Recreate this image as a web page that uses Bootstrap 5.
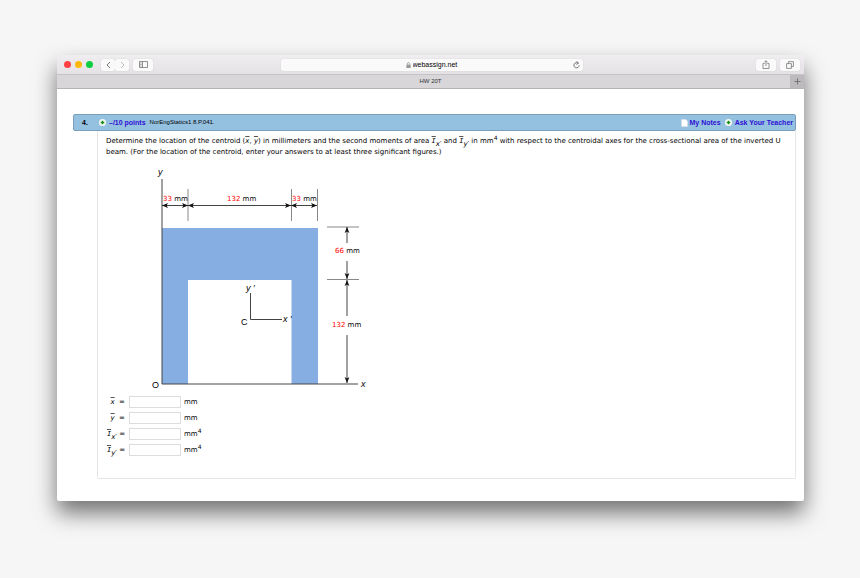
<!DOCTYPE html>
<html lang="en">
<head>
<meta charset="utf-8">
<meta name="viewport" content="width=device-width, initial-scale=1">
<title>HW 20T</title>
<link href="https://cdn.jsdelivr.net/npm/bootstrap@5.3.0/dist/css/bootstrap.min.css" rel="stylesheet">
<style>
  body { background: #f6f6f6; color: #000; font-family: "DejaVu Sans", sans-serif; font-size: 7px; line-height: 11px; padding: 55px 56px 60px 57px; }
  .ui-font { font-family: "Liberation Sans", sans-serif; }
  .browser { border-radius: 4px 4px 2px 2px; box-shadow: 0 12px 22px rgba(0,0,0,.54); }
  .toolbar { height: 20px; padding: 0 4px 0 7px; background: linear-gradient(#efedef, #e4e2e4); border-bottom: 1px solid #c5c3c5; border-radius: 4px 4px 0 0; }
  .dot { width: 7px; height: 7px; border-radius: 50%; }
  .dot-red { background: #fc4044; } .dot-amber { background: #fdb90b; } .dot-green { background: #0bcf40; }
  .tool { display: flex; align-items: center; justify-content: center; width: 20px; height: 12px; padding: 0; border: 0; border-radius: 2px; background: #fbfafb; color: #777; box-shadow: 0 0 1px rgba(0,0,0,.2); }
  .tool-nav { width: 14px; }
  .tool svg, .address svg { display: block; fill: none; stroke: currentColor; }
  .address { width: 41%; height: 12px; background: #fbfafb; border-radius: 2px; box-shadow: 0 0 1px rgba(0,0,0,.2); }
  .address input { width: 46px; height: 10px; padding: 0; border: 0; background: transparent; font-size: 7px; line-height: 10px; color: #000; }
  .address .lock { margin-right: 2px; }
  .reload { padding: 0; border: 0; background: transparent; color: #555; width: 10px; }
  .tabs { height: 14px; padding-left: 14px; background: #d8d6d8; border-bottom: 1px solid #b5b3b5; font-size: 6px; color: #333; }
  .tab-new { width: 14px; border: 0; padding: 0; background: #bcbabc; color: #666; display: flex; align-items: center; justify-content: center; }
  .sheet { padding: 25px 8px 22px 16px; }
  .question-head { height: 17px; padding: 0 2px 0 8px; background: #95c1e1; border: 1px solid #7a9fbc; border-radius: 2px; font-size: 7px; }
  .question-head a { color: #2e10d4; font-weight: 700; text-decoration: none; }
  .source { font-size: 6px; }
  .number { width: 17px; }
  .plus { width: 7px; height: 7px; display: block; margin-right: 3px; }
  .note-icon { margin-right: 2px; }
  .question-body { margin-left: 24px; padding: 5px 6px 20px 8px; border: 1px solid #e6e6e6; border-top: 0; border-radius: 0 0 2px 2px; }
  .bar { text-decoration: overline #555; }
  .cap { font-family: "DejaVu Sans Mono", monospace; font-style: italic; }
  sub, sup { font-size: 6px; line-height: 0; }
  sub { font-size: 7px; bottom: -3px; }
  .figure-svg { display: block; width: 240px; margin: 5px 0 1px 39px; }
  .answer { height: 16px; }
  .answer label { width: 19px; text-align: right; white-space: nowrap; }
  .answer input { width: 52px; height: 12px; margin: 0 3px 0 4px; padding: 0 2px; border: 1px solid #ddd; background: #fff; font-size: 7px; }
</style>
</head>
<body>
<main class="browser bg-white">
  <header class="toolbar d-flex align-items-center ui-font">
    <div class="d-flex align-items-center flex-fill w-25">
      <div class="d-flex gap-1 me-2"><span class="dot dot-red"></span><span class="dot dot-amber"></span><span class="dot dot-green"></span></div>
      <button class="tool tool-nav" aria-label="Back"><svg width="5" height="8" viewBox="0 0 5 8"><path d="M4 1 1 4l3 3"/></svg></button>
      <button class="tool tool-nav" aria-label="Forward"><svg width="5" height="8" viewBox="0 0 5 8"><path stroke="#bbb" d="m1 1 3 3-3 3"/></svg></button>
      <button class="tool ms-1" aria-label="Sidebar"><svg width="9" height="7" viewBox="0 0 9 7"><path stroke-width=".8" d="M.5.5h8v6h-8zM3.5.5v6M1.3 2h1.2M1.3 3.5h1.2M1.3 5h1.2"/></svg></button>
    </div>
    <div class="address d-flex align-items-center">
      <span class="reload"></span>
      <div class="d-flex align-items-center justify-content-center flex-fill">
        <svg class="lock" width="5" height="6" viewBox="0 0 5 7"><path stroke="#999" d="M1.2 3V2a1.3 1.3 0 0 1 2.6 0v1"/><path fill="#999" stroke="none" d="M0 3h5v4H0z"/></svg>
        <input type="text" value="webassign.net" aria-label="Address">
      </div>
      <button class="reload" aria-label="Reload"><svg width="7" height="8" viewBox="0 0 7 8"><path stroke-width=".8" d="M5.3 2.4A2.6 2.6 0 1 0 6.1 4.4M3.5.3l2 1.7-2 1.5"/></svg></button>
    </div>
    <div class="d-flex justify-content-end gap-1 flex-fill w-25">
      <button class="tool" aria-label="Share"><svg width="8" height="9" viewBox="0 0 8 9"><path stroke-width=".8" d="M2.7 3.5H1v5h6v-5H5.3M4 6V.8M2.4 2.3 4 .7l1.6 1.6"/></svg></button>
      <button class="tool" aria-label="Tabs"><svg width="8" height="8" viewBox="0 0 8 8"><path stroke-width=".8" d="M.6 2.6h4.8v4.8H.6zM2.4 2.6V.6h5v5h-2"/></svg></button>
    </div>
  </header>
  <div class="tabs d-flex ui-font">
    <div class="flex-fill d-flex align-items-center justify-content-center">HW 20T</div>
    <button class="tab-new" aria-label="New tab"><svg width="7" height="7" viewBox="0 0 7 7"><path stroke="currentColor" stroke-width=".8" d="M3.5.5v6M.5 3.5h6"/></svg></button>
  </div>

  <div class="sheet">
    <div class="question-head d-flex align-items-center ui-font">
      <b class="number">4.</b>
      <svg class="plus" viewBox="0 0 7 7"><circle cx="3.5" cy="3.5" r="3.5" fill="#f4f8f2"/><path stroke="#158a15" stroke-width="1.3" d="M3.5 1.7v3.6M1.7 3.5h3.6"/></svg>
      <a href="#" class="me-1">–/10 points</a>
      <span class="source">NorEngStatics1 8.P.041.</span>
      <svg class="note-icon ms-auto" width="7" height="8" viewBox="0 0 7 8"><path fill="#fff" stroke="#bccbd6" stroke-width=".5" d="M.3.3h4.5l1.9 1.9v5.5H.3z"/></svg>
      <a href="#">My Notes</a>
      <svg class="plus ms-1" viewBox="0 0 7 7"><circle cx="3.5" cy="3.5" r="3.5" fill="#f4f8f2"/><path stroke="#158a15" stroke-width="1.3" d="M3.5 1.7v3.6M1.7 3.5h3.6"/></svg>
      <a href="#">Ask Your Teacher</a>
    </div>
    <div class="question-body">
      <p class="mb-0">Determine the location of the centroid (<i class="bar">x</i>, <i class="bar">y</i>) in millimeters and the second moments of area <span class="cap bar">I</span><sub><i>x</i>′</sub> and <span class="cap bar">I</span><sub><i>y</i>′</sub> in mm<sup>4</sup> with respect to the centroidal axes for the cross-sectional area of the inverted U beam. (For the location of the centroid, enter your answers to at least three significant figures.)</p>
      <svg class="figure-svg" viewBox="145 163 240 230" font-family="DejaVu Sans, sans-serif" font-size="7" fill="#000" role="img" aria-label="Inverted U beam cross-section">
        <defs>
          <marker id="tip" markerUnits="userSpaceOnUse" markerWidth="8" markerHeight="6" refX="7" refY="3" orient="auto-start-reverse"><path fill="#111" d="M7 3 1 .6 2.4 3 1 5.4z"/></marker>
        </defs>
        <path fill="#86aee3" d="M162 228h156v156h-26.500V280H188v104h-26z"/>
        <g fill="none" stroke="#888">
          <path d="M188 189v32M291.500 189v32M317.500 189v32M327 227h32M327 279.500h32"/>
          <path stroke="#444" d="M162 179v205h196M250.500 293v26.500H282"/>
        </g>
        <g stroke="#444" fill="none">
          <path marker-start="url(#tip)" marker-end="url(#tip)" d="M162 205.500h26"/>
          <path marker-start="url(#tip)" marker-end="url(#tip)" d="M188 205.500h103"/>
          <path marker-start="url(#tip)" marker-end="url(#tip)" d="M291 205.500h26"/>
          <path marker-start="url(#tip)" d="M347 227v16"/>
          <path marker-end="url(#tip)" d="M347 261v18"/>
          <path marker-start="url(#tip)" d="M347 280v36"/>
          <path marker-end="url(#tip)" d="M347 335v48"/>
        </g>
        <text x="163" y="201"><tspan fill="#f00">33</tspan> mm</text>
        <text x="227" y="201"><tspan fill="#f00">132</tspan> mm</text>
        <text x="292" y="201"><tspan fill="#f00">33</tspan> mm</text>
        <text x="335" y="253"><tspan fill="#f00">66</tspan> mm</text>
        <text x="332" y="327"><tspan fill="#f00">132</tspan> mm</text>
        <g font-family="Liberation Sans, sans-serif" font-size="9">
          <text x="158" y="175" font-style="italic">y</text>
          <text x="361" y="387" font-style="italic">x</text>
          <text x="246" y="291" font-style="italic">y ′</text>
          <text x="283" y="322" font-style="italic">x ′</text>
          <text x="241" y="325">C</text>
          <text x="152" y="388">O</text>
        </g>
      </svg>
      <div class="answer d-flex align-items-center"><label for="ax"><i class="bar">x</i>&nbsp; =</label><input id="ax" type="text"><span>mm</span></div>
      <div class="answer d-flex align-items-center"><label for="ay"><i class="bar">y</i>&nbsp; =</label><input id="ay" type="text"><span>mm</span></div>
      <div class="answer d-flex align-items-center"><label for="ix"><span class="cap bar">I</span><sub><i>x</i>′</sub> =</label><input id="ix" type="text"><span>mm<sup>4</sup></span></div>
      <div class="answer d-flex align-items-center"><label for="iy"><span class="cap bar">I</span><sub><i>y</i>′</sub> =</label><input id="iy" type="text"><span>mm<sup>4</sup></span></div>
    </div>
  </div>
</main>
<script src="https://cdn.jsdelivr.net/npm/bootstrap@5.3.0/dist/js/bootstrap.bundle.min.js"></script>
</body>
</html>
